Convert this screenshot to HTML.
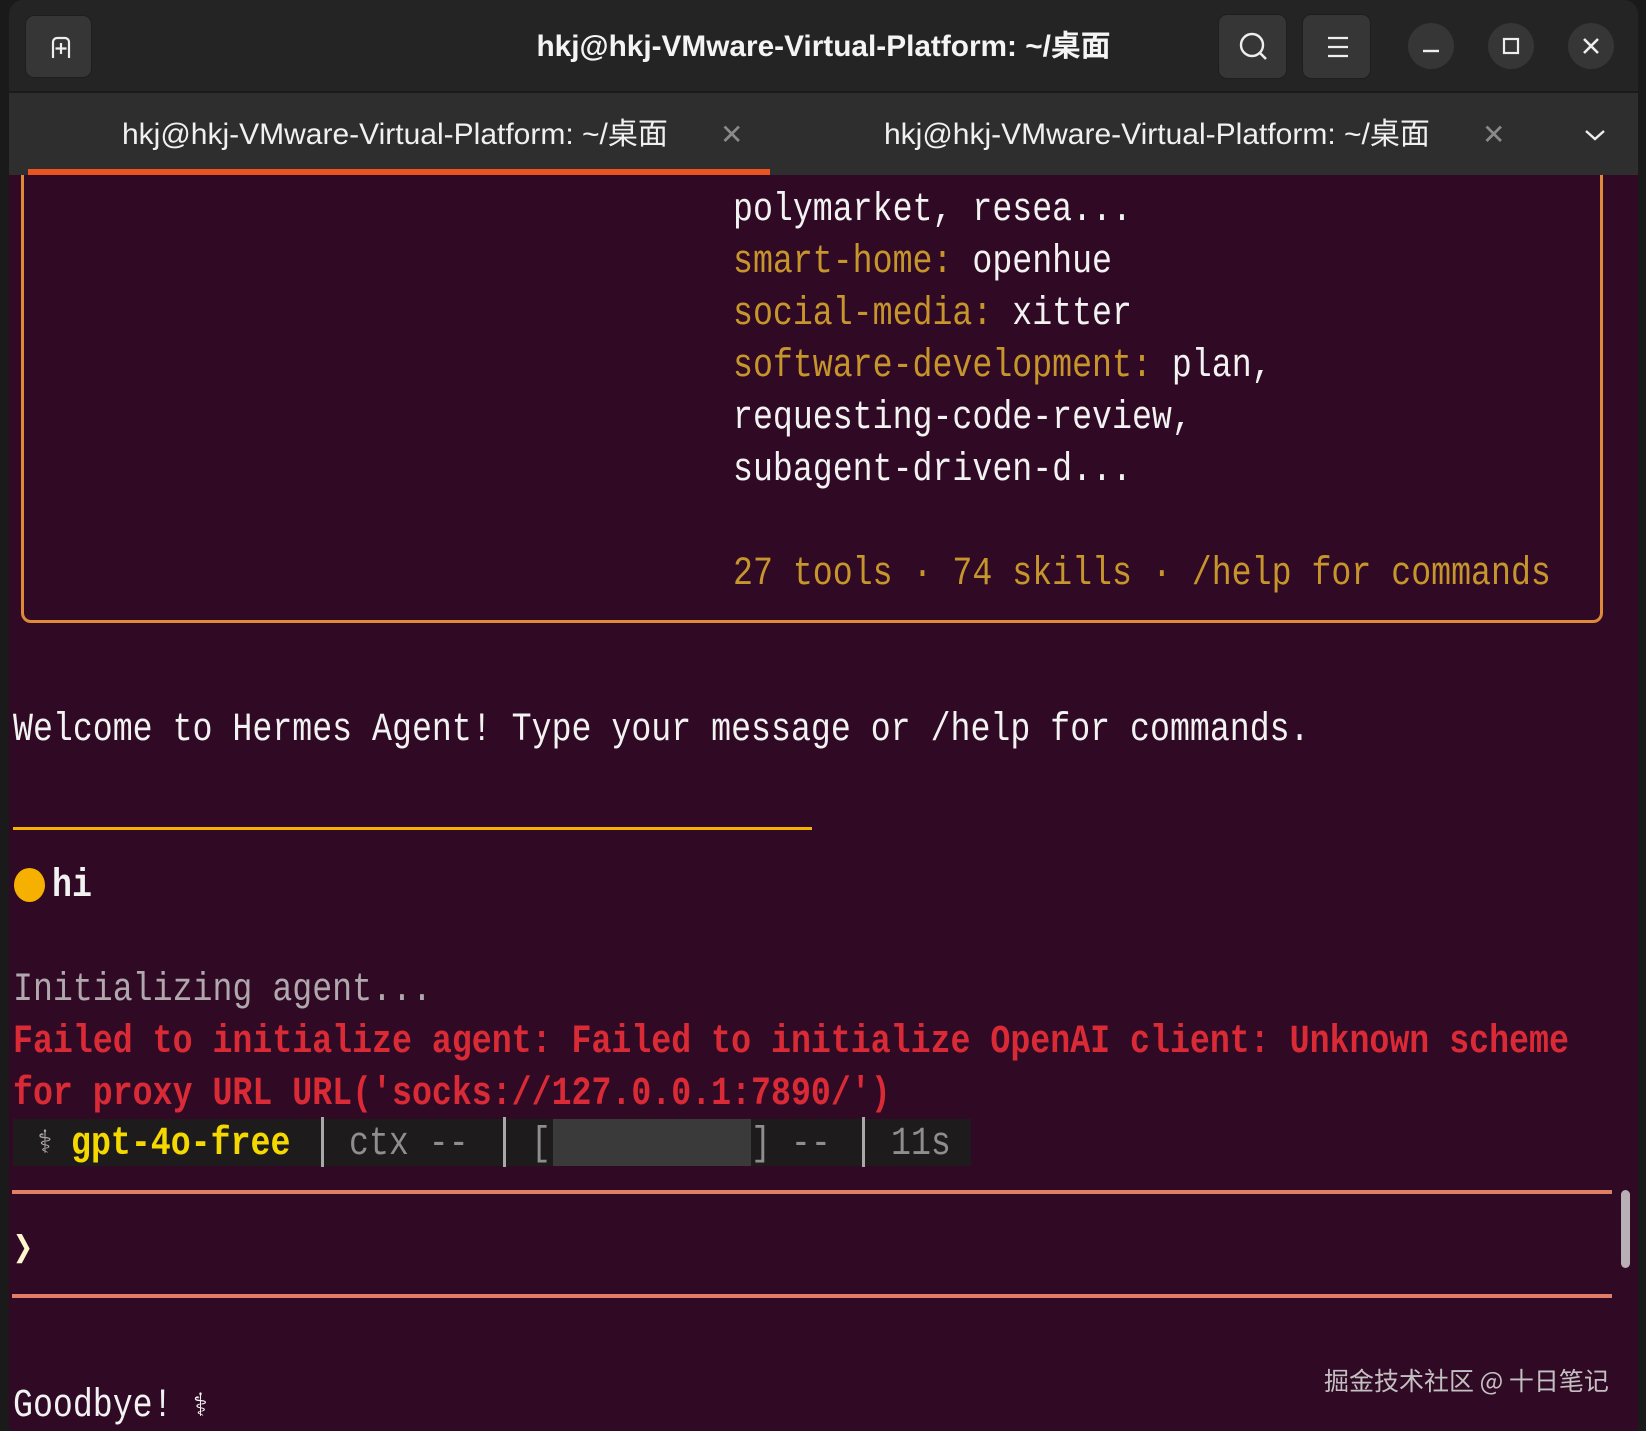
<!DOCTYPE html>
<html><head><meta charset="utf-8"><style>
*{margin:0;padding:0;box-sizing:border-box}
html,body{width:1646px;height:1431px;overflow:hidden;background:#1a1a1a}
body{position:relative;font-family:"Liberation Sans","Noto Sans CJK SC",sans-serif}
.win{position:absolute;left:9px;top:0;width:1629px;height:1431px;background:#300a24;border-radius:14px 14px 0 0;overflow:hidden}
.title{position:absolute;left:0;top:0;width:100%;height:93px;background:#242424;border-bottom:2px solid #1b1b1b;z-index:5}
.tabs{position:absolute;left:0;top:93px;width:100%;height:82px;background:#2e2e2e;z-index:5}
.btn{position:absolute;background:#363636;border-radius:9px;border:1px solid #1e1e1e}
.circ{position:absolute;width:46px;height:46px;border-radius:50%;background:#363636;top:23px}
.t{position:absolute;white-space:pre;font-family:"Liberation Mono","Noto Sans CJK SC",monospace;font-size:40px;line-height:52px;height:52px;transform:scaleX(0.831);transform-origin:0 50%;color:#f2f2f2}
.g{color:#c6952b}
.r{color:#d92a36;font-weight:bold}
.gr{color:#b0a8ad}
.c{position:absolute;left:0;top:3px;width:100%;height:1428px}
</style></head><body>
<div class="win">
 <div class="title">
  <div class="btn" style="left:16px;top:15px;width:67px;height:63px">
   <svg width="67" height="63" viewBox="0 0 67 63"><path d="M27 42V26a4 4 0 0 1 4-4h8a4 4 0 0 1 4 4v16M35 27v11M29.5 32.5h11" stroke="#eee" stroke-width="2.2" fill="none"/></svg>
  </div>
  <div style="position:absolute;left:0;width:1629px;top:27px;text-align:center;color:#f4f4f4;font-size:29.8px;font-weight:bold;line-height:40px">hkj@hkj-VMware-Virtual-Platform: ~/桌面</div>
  <div class="btn" style="left:1209px;top:14px;width:69px;height:65px">
   <svg width="69" height="65"><circle cx="33" cy="30" r="11" stroke="#eee" stroke-width="2.4" fill="none"/><path d="M41 38l6 6" stroke="#eee" stroke-width="2.6"/></svg>
  </div>
  <div class="btn" style="left:1293px;top:14px;width:69px;height:65px">
   <svg width="69" height="65"><path d="M25 23h20M25 32h20M25 41h20" stroke="#eee" stroke-width="2.2"/></svg>
  </div>
  <div class="circ" style="left:1399px"><svg width="46" height="46"><path d="M15 28h16" stroke="#eee" stroke-width="2.4"/></svg></div>
  <div class="circ" style="left:1479px"><svg width="46" height="46"><rect x="16" y="16" width="14" height="14" stroke="#eee" stroke-width="2.2" fill="none"/></svg></div>
  <div class="circ" style="left:1559px"><svg width="46" height="46"><path d="M16 16l14 14M30 16l-14 14" stroke="#eee" stroke-width="2.6"/></svg></div>
 </div>
 <div class="tabs">
  <div style="position:absolute;left:113px;top:22px;color:#f0f0f0;font-size:30px;line-height:40px">hkj@hkj-VMware-Virtual-Platform: ~/桌面</div>
  <div style="position:absolute;left:711px;top:22px;color:#8a8a8a;font-size:28px;line-height:40px">✕</div>
  <div style="position:absolute;left:875px;top:22px;color:#f0f0f0;font-size:30px;line-height:40px">hkj@hkj-VMware-Virtual-Platform: ~/桌面</div>
  <div style="position:absolute;left:1473px;top:22px;color:#8a8a8a;font-size:28px;line-height:40px">✕</div>
  <svg style="position:absolute;left:1573px;top:32px" width="26" height="20"><path d="M4 6l9 8 9-8" stroke="#eee" stroke-width="2.4" fill="none"/></svg>
  <div style="position:absolute;left:19px;top:76px;width:742px;height:6px;background:#e95420"></div>
 </div>
 <div class="c">
 <div style="position:absolute;left:12px;top:140px;width:1582px;height:480px;border:3px solid #de8a3a;border-radius:0 0 10px 10px"></div>
 <div class="t" style="left:724px;top:182px">polymarket, resea...</div>
 <div class="t" style="left:724px;top:234px"><span class="g">smart-home:</span> openhue</div>
 <div class="t" style="left:724px;top:286px"><span class="g">social-media:</span> xitter</div>
 <div class="t" style="left:724px;top:338px"><span class="g">software-development:</span> plan,</div>
 <div class="t" style="left:724px;top:390px">requesting-code-review,</div>
 <div class="t" style="left:724px;top:442px">subagent-driven-d...</div>
 <div class="t g" style="left:724px;top:546px">27 tools · 74 skills · /help for commands</div>
 <div class="t" style="left:4px;top:702px">Welcome to Hermes Agent! Type your message or /help for commands.</div>
 <div style="position:absolute;left:4px;top:824px;width:799px;height:3px;background:#f5b000"></div>
 <div style="position:absolute;left:5px;top:865px;width:31px;height:34px;border-radius:50%;background:#f5b000"></div>
 <div class="t" style="left:43px;top:858px;font-weight:bold">hi</div>
 <div class="t gr" style="left:4px;top:962px">Initializing agent...</div>
 <div class="t r" style="left:4px;top:1014px">Failed to initialize agent: Failed to initialize OpenAI client: Unknown scheme</div>
 <div class="t r" style="left:4px;top:1066px">for proxy URL URL('socks://127.0.0.1:7890/')</div>
 <div style="position:absolute;left:4px;top:1116px;width:958px;height:47px;background:#1d1b1c"></div>
 <div style="position:absolute;left:544px;top:1116px;width:198px;height:47px;background:#3a3a3a"></div>
 <div style="position:absolute;left:312px;top:1114px;width:3px;height:50px;background:#a8a8a8"></div>
 <div style="position:absolute;left:494px;top:1114px;width:3px;height:50px;background:#a8a8a8"></div>
 <div style="position:absolute;left:853px;top:1114px;width:3px;height:50px;background:#a8a8a8"></div>
 <div class="t gr" style="left:28px;top:1116px;font-size:32px">⚕</div>
 <div class="t" style="left:62px;top:1116px;color:#f5d800;font-weight:bold">gpt-4o-free</div>
 <div class="t" style="left:340px;top:1116px;color:#8e8e8e">ctx --</div>
 <div class="t" style="left:522px;top:1116px;color:#8e8e8e">[</div>
 <div class="t" style="left:742px;top:1116px;color:#8e8e8e">] --</div>
 <div class="t" style="left:882px;top:1116px;color:#8e8e8e">11s</div>
 <div style="position:absolute;left:3px;top:1187px;width:1600px;height:4px;background:#e07e66"></div>
 <div class="t" style="left:4px;top:1222px;color:#fff6d0;font-weight:bold">❯</div>
 <div style="position:absolute;left:3px;top:1291px;width:1600px;height:4px;background:#e07e66"></div>
 <div style="position:absolute;left:1612px;top:1187px;width:9px;height:78px;border-radius:5px;background:#b8b0b4"></div>
 <div class="t" style="left:4px;top:1378px">Goodbye! <span style="font-size:32px">⚕</span></div>
 <div style="position:absolute;left:1315px;top:1360px;color:#c4c0c2;font-size:25px;line-height:34px;font-family:'Noto Sans CJK SC',sans-serif">掘金技术社区 @ 十日笔记</div>
 </div>
</div>
</body></html>
